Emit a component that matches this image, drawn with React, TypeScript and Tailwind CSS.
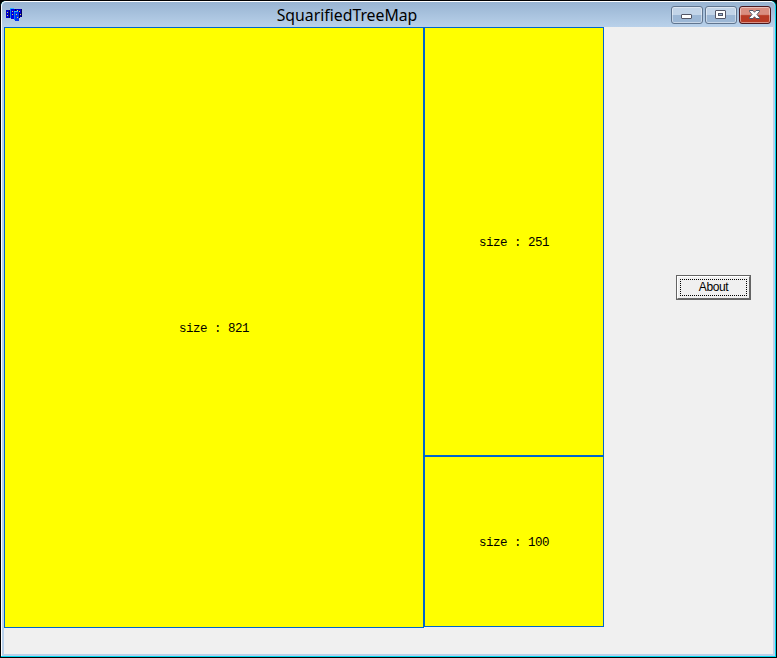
import React from "react";

const tile =
  "flex items-center justify-center border border-[#0066cc] bg-[#ffff00] pt-[2px] font-['Liberation_Mono',monospace] text-[12.5px] leading-4 tracking-[-0.5px] text-black whitespace-pre";

const windowButton =
  "flex h-[18px] w-8 items-center justify-center rounded-[3px] border shadow-[inset_0_0_0_1px_rgba(255,255,255,0.45)]";

function AppIcon() {
  return (
    <svg width="16" height="13" viewBox="0 0 16 13" shapeRendering="crispEdges">
      <path fill="#0000c8" d="M0 2h4v8H0zM10 1h5v8h-5z" />
      <path fill="#0878f8" d="M4 0h4v10H4z" />
      <path fill="#0000e0" d="M5 1h4v10H5z" />
      <path fill="#0878f8" d="M8 3h1v9H8z" />
      <path fill="#0030f0" d="M9 4h4v9H9z" />
      <path fill="#000060" d="M3 2h1v8H3zM9 1h1v3H9zM15 1h1v8h-1zM13 5h1v5h-1z" />
      <path fill="#28b8ff" d="M4 0h4v1H4zM8 3h4v1H8z" />
      <path
        fill="#d8d060"
        d="M1 4h1v1H1zM1 7h1v1H1zM6 3h1v1H6zM6 6h1v1H6zM11 2h1v1h-1zM13 3h1v1h-1zM14 6h1v1h-1zM10 6h1v1h-1zM11 9h1v1h-1z"
      />
    </svg>
  );
}

function WindowControls() {
  return (
    <div className="flex gap-[2px] pt-[4px]">
      <div className={`${windowButton} border-[#60758f] bg-linear-to-b from-[#c2d4e8] from-48% to-[#9cb7d5] to-52%`}>
        <svg width="12" height="10" viewBox="0 0 12 10">
          <rect x="0.5" y="4.5" width="10" height="4" rx="0.5" fill="#fff" stroke="#535666" />
        </svg>
      </div>
      <div className={`${windowButton} border-[#60758f] bg-linear-to-b from-[#c2d4e8] from-48% to-[#9cb7d5] to-52%`}>
        <svg width="12" height="10" viewBox="0 0 12 10">
          <rect x="0.5" y="0.5" width="10" height="8" rx="0.5" fill="#fff" stroke="#535666" />
          <rect x="3.5" y="3.5" width="4" height="2" fill="#9cb7d5" stroke="#535666" />
        </svg>
      </div>
      <div className={`${windowButton} border-[#4a1820] bg-linear-to-b from-[#d98d80] from-46% to-[#b83a25] to-54%`}>
        <svg width="12" height="10" viewBox="0 0 12 10">
          <path
            d="M0.5 0.5h3.5l1.5 1.8 1.5-1.8h3.5v1L8 4.5l2.5 3v1H7L5.5 6.7 4 8.5H0.5v-1L3 4.5l-2.5-3z"
            fill="#fff"
            stroke="#535666"
          />
        </svg>
      </div>
    </div>
  );
}

export default function App() {
  return (
    <div className="h-[658px] w-[777px] overflow-hidden bg-black">
      <div className="h-full rounded-t-[6px] border border-black bg-[#00d8f0]">
        <div className="flex h-[655px] w-[774px] flex-col rounded-t-[5px] border-t border-l border-white bg-[#b9d1ea]">
          <header className="grid h-[25px] shrink-0 grid-cols-[1fr_auto_1fr] rounded-t-[5px] bg-linear-to-b from-[#98b4d2] to-[#b9d1ea]">
            <div className="pt-[6px] pl-1">
              <AppIcon />
            </div>
            <h1 className="pt-px pr-[83px] font-['Noto_Sans','Open_Sans',sans-serif] text-[15.8px] leading-6 text-black">
              SquarifiedTreeMap
            </h1>
            <div className="flex justify-end pr-1">
              <WindowControls />
            </div>
          </header>
          <main className="ml-[2px] flex h-[627px] w-[769px] bg-[#f0f0f0]">
            <div className={`${tile} h-[601px] w-[420px]`}>size : 821</div>
            <div className="w-[180px]">
              <div className={`${tile} h-[429px]`}>size : 251</div>
              <div className={`${tile} h-[171px]`}>size : 100</div>
            </div>
            <div className="pt-[248px] pl-[72px]">
              <button className="flex h-[25px] w-[75px] border border-[#646464] bg-[#f0f0f0] font-['Liberation_Sans',sans-serif] text-xs tracking-[-0.4px] text-black">
                <span className="flex h-full w-full border border-t-white border-r-[#696969] border-b-[#696969] border-l-white p-[2px]">
                  <span className="flex h-full w-full items-center justify-center border border-dotted border-black pb-px leading-none">
                    About
                  </span>
                </span>
              </button>
            </div>
          </main>
        </div>
      </div>
    </div>
  );
}
